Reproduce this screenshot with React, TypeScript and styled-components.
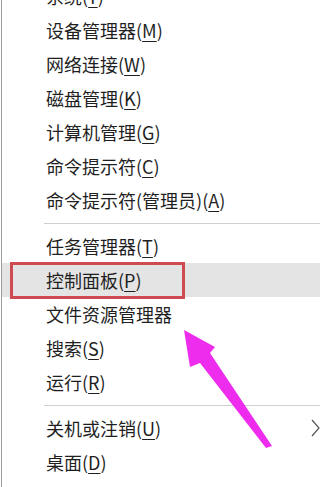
import React from 'react';
import styled, { createGlobalStyle } from 'styled-components';

const GlobalStyle = createGlobalStyle`
  html, body {
    margin: 0;
    padding: 0;
    background: #ffffff;
  }
  body {
    font-family: "Noto Sans CJK SC", "Noto Sans", sans-serif;
  }
`;

const Page = styled.div`
  position: relative;
  width: 320px;
  height: 487px;
  overflow: hidden;
  background: #ffffff;
`;

const Menu = styled.ul`
  list-style: none;
  margin: -21px 0 0 1px;
  padding: 0;
  border-left: 1px solid #9c9c9c;
  min-height: 530px;
  display: flex;
  flex-direction: column;
`;

const Item = styled.li<{ $active?: boolean }>`
  position: relative;
  height: 34px;
  display: flex;
  align-items: center;
  padding-left: 44px;
  font-size: 18px;
  color: #1f1f1f;
  white-space: nowrap;
  background: ${({ $active }) => ($active ? '#e4e4e4' : 'transparent')};

  ${({ $active }) =>
    $active &&
    `
    &::after {
      content: '';
      position: absolute;
      left: 8px;
      top: -1px;
      width: 169px;
      height: 31px;
      border: 3px solid #cf4b52;
    }
  `}
`;

const Key = styled.span`
  text-decoration: underline;
  text-underline-offset: 3px;
  text-decoration-thickness: 1px;
`;

const Separator = styled.li`
  height: 12px;
  display: flex;
  align-items: center;
  padding-left: 42px;

  &::before {
    content: '';
    flex: 1;
    height: 1px;
    background: #cfcfcf;
  }
`;

const SubArrow = styled.svg`
  position: absolute;
  right: 0;
  top: 8px;
`;

const Annotation = styled.svg`
  position: absolute;
  left: 0;
  top: 0;
  pointer-events: none;
`;

type Entry = { label: string; key?: string; active?: boolean; sub?: boolean } | 'sep';

const entries: Entry[] = [
  { label: '系统', key: 'Y' },
  { label: '设备管理器', key: 'M' },
  { label: '网络连接', key: 'W' },
  { label: '磁盘管理', key: 'K' },
  { label: '计算机管理', key: 'G' },
  { label: '命令提示符', key: 'C' },
  { label: '命令提示符(管理员)', key: 'A' },
  'sep',
  { label: '任务管理器', key: 'T' },
  { label: '控制面板', key: 'P', active: true },
  { label: '文件资源管理器' },
  { label: '搜索', key: 'S' },
  { label: '运行', key: 'R' },
  'sep',
  { label: '关机或注销', key: 'U', sub: true },
  { label: '桌面', key: 'D' },
];

export default function App() {
  return (
    <>
      <GlobalStyle />
      <Page>
        <Menu>
          {entries.map((e, i) =>
            e === 'sep' ? (
              <Separator key={i} />
            ) : (
              <Item key={i} $active={e.active}>
                {e.label}
                {e.key && (
                  <>
                    (<Key>{e.key}</Key>)
                  </>
                )}
                {e.sub && (
                  <SubArrow width="9" height="18" viewBox="0 0 9 18">
                    <polyline points="1,1 8,9 1,17" fill="none" stroke="#555" strokeWidth="1.2" />
                  </SubArrow>
                )}
              </Item>
            )
          )}
        </Menu>
        <Annotation width="320" height="487" viewBox="0 0 320 487">
          <polygon
            points="184,330 215,347 210,353 272,446 266,448 200,363 190,367"
            fill="#ee2cee"
          />
        </Annotation>
      </Page>
    </>
  );
}
